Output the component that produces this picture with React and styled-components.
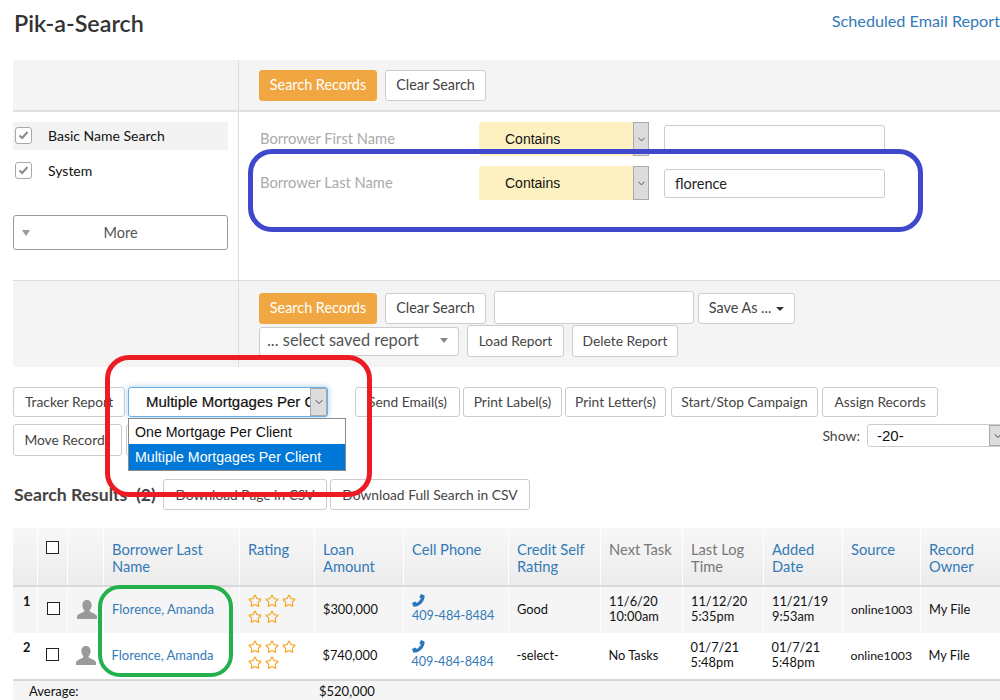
import React from 'react'
import styled, {createGlobalStyle} from 'styled-components'
import {Star, ChevronDown} from 'lucide-react'

const GlobalStyle = createGlobalStyle`
    html, body {
        margin: 0;
        padding: 0;
        background: #fff;
    }
    body {
        font-family: "Lato", "Open Sans", sans-serif;
        color: #333;
    }
`

const Page = styled.div`
    position: relative;
    width: 1000px;
    height: 700px;
    overflow: hidden;
    background: #fff;
`

const Header = styled.div`
    height: 60px;
    display: flex;
    justify-content: space-between;
    align-items: flex-start;
    padding-left: 14px;
`
const Title = styled.h1`
    margin: 10px 0 0;
    font-size: 23.3px;
    line-height: 27px;
    font-weight: 600;
    color: #333;
`
const ReportLink = styled.a`
    margin-top: 11px;
    font-size: 16.2px;
    line-height: 20px;
    color: #337ab7;
`

const Panel = styled.div`
    margin-left: 13px;
`
const Band = styled.div`
    display: flex;
    height: ${p => p.$height}px;
    background: #f4f4f4;
    border-bottom: ${p => p.$bottom ? '2px solid #e0e0e0' : 'none'};
    border-top: ${p => p.$top ? '1px solid #dcdcdc' : 'none'};
`
const SideCell = styled.div`
    width: 225px;
    flex: none;
    border-right: 1px solid #dcdcdc;
`
const MainCell = styled.div`
    flex: 1;
    min-width: 0;
    padding: ${p => p.$padding};
    display: flex;
    flex-direction: column;
`
const Middle = styled.div`
    display: flex;
    height: 168px;
`
const SideList = styled.div`
    width: 225px;
    flex: none;
    border-right: 1px solid #dcdcdc;
    padding-top: 10px;
`
const CheckRow = styled.div`
    display: flex;
    align-items: center;
    width: 215px;
    height: 28px;
    margin-bottom: 6px;
    padding-bottom: ${p => p.$active ? 2 : 0}px;
    box-sizing: border-box;
    background: ${p => p.$active ? '#f3f3f3' : 'transparent'};
    font-size: 14px;
    color: #111;
`
const CheckBox = styled.span`
    width: 15px;
    height: 15px;
    margin: 0 16px 0 2px;
    border: 1px solid #a8a8a8;
    border-radius: 3px;
    background: #fff;
    display: flex;
    align-items: center;
    justify-content: center;
`
const MoreButton = styled.div`
    position: relative;
    width: 213px;
    height: 33px;
    margin-top: 31px;
    border: 1px solid #999;
    border-radius: 3px;
    display: flex;
    align-items: center;
    justify-content: center;
    font-size: 14.5px;
    color: #555;
`
const MoreArrow = styled.span`
    position: absolute;
    left: 8px;
    top: 14px;
    border-left: 4px solid transparent;
    border-right: 4px solid transparent;
    border-top: 6px solid #999;
`
const Fields = styled.div`
    flex: 1;
    padding: 10px 0 0 21px;
    display: flex;
    flex-direction: column;
    gap: 10px;
`
const FieldRow = styled.div`
    display: grid;
    grid-template-columns: 204px 170px 221px;
    column-gap: 15px;
    align-items: center;
    height: 34px;
`
const FieldLabel = styled.span`
    padding-bottom: 2px;
    font-size: 14.7px;
    color: #aaa;
`
const MatchSelect = styled.div`
    height: 34px;
    box-sizing: border-box;
    display: flex;
    align-items: center;
    justify-content: space-between;
    background: #fdf1c1;
    border-radius: 3px;
    padding-left: 26px;
    font-family: "Liberation Sans", Arial, sans-serif;
    font-size: 14px;
    color: #111;
`
const ArrowBox = styled.span`
    width: ${p => p.$width || 16}px;
    align-self: stretch;
    flex: none;
    display: flex;
    align-items: center;
    justify-content: center;
    background: #dcdcdc;
    border: 1px solid #aaa;
    box-sizing: border-box;
    color: #444;
`
const TextBox = styled.div`
    height: ${p => p.$height || 29}px;
    width: ${p => p.$width ? p.$width + 'px' : 'auto'};
    box-sizing: border-box;
    background: #fff;
    border: 1px solid #ccc;
    border-radius: 3px;
    padding-left: 10px;
    display: flex;
    align-items: center;
    font-size: 14.5px;
    color: #222;
`
const ButtonRow = styled.div`
    display: flex;
    align-items: ${p => p.$align || 'center'};
    gap: ${p => p.$gap || 4}px;
    margin-top: ${p => p.$top || 0}px;
`
const Button = styled.div`
    height: ${p => p.$height || 31}px;
    width: ${p => p.$width}px;
    flex: none;
    box-sizing: border-box;
    display: flex;
    align-items: center;
    justify-content: center;
    margin-left: ${p => p.$shift || 0}px;
    padding-bottom: ${p => p.$large ? 2 : 1}px;
    border-radius: 3px;
    border: 1px solid ${p => p.$primary ? '#f0a741' : '#ccc'};
    background: ${p => p.$primary ? '#f0a741' : '#fff'};
    color: ${p => p.$primary ? '#fff' : '#444'};
    font-size: ${p => p.$large ? 14.4 : 13.8}px;
    white-space: nowrap;
`
const Caret = styled.span`
    margin-left: 5px;
    margin-top: 2px;
    border-left: 4px solid transparent;
    border-right: 4px solid transparent;
    border-top: 4px solid #333;
`
const SavedSelect = styled.div`
    width: 200px;
    height: 29px;
    box-sizing: border-box;
    display: flex;
    align-items: center;
    justify-content: space-between;
    padding: 0 10px 3px 7px;
    border: 1px solid #ccc;
    border-radius: 3px;
    background: #fff;
    font-size: 16.4px;
    color: #555;
`
const GreyArrow = styled.span`
    margin-top: 2px;
    border-left: 4px solid transparent;
    border-right: 4px solid transparent;
    border-top: 5px solid #888;
`

const Toolbar = styled.div`
    margin: 20px 0 0 13px;
    position: relative;
    display: flex;
    flex-direction: column;
    gap: 7px;
`
const ReportSelectWrap = styled.div`
    position: relative;
    width: 200px;
    height: 30px;
    flex: none;
    margin-right: 24px;
`
const ReportSelect = styled.div`
    height: 30px;
    box-sizing: border-box;
    display: flex;
    align-items: stretch;
    border: 1px solid #66afe9;
    border-radius: 3px;
    box-shadow: 0 0 6px rgba(102, 175, 233, .6);
    background: #fff;
    font-family: "Liberation Sans", Arial, sans-serif;
    font-size: 15px;
    color: #111;
    -webkit-text-stroke: .2px #111;
`
const ReportValue = styled.span`
    flex: 1;
    min-width: 0;
    overflow: hidden;
    white-space: nowrap;
    padding-left: 17px;
    line-height: 28px;
`
const Dropdown = styled.div`
    position: absolute;
    z-index: 2;
    top: 31px;
    left: 0;
    width: 218px;
    box-sizing: border-box;
    border: 1px solid #8c8c8c;
    background: #fff;
    font-family: "Liberation Sans", Arial, sans-serif;
    font-size: 14.2px;
`
const DropdownOption = styled.div`
    height: ${p => p.$selected ? 26 : 25}px;
    padding-left: 6px;
    display: flex;
    align-items: center;
    color: ${p => p.$selected ? '#fff' : '#111'};
    background: ${p => p.$selected ? '#0078d7' : '#fff'};
`
const SecondRow = styled.div`
    display: flex;
    align-items: flex-start;
    gap: 4px;
`
const ShowGroup = styled.div`
    margin-left: auto;
    display: flex;
    align-items: center;
    gap: 7px;
    font-size: 14px;
    color: #444;
`
const ShowSelect = styled.div`
    width: 140px;
    height: 23px;
    box-sizing: border-box;
    display: flex;
    justify-content: space-between;
    align-items: stretch;
    border: 1px solid #ccc;
    border-radius: 3px;
    padding-left: 9px;
    line-height: 21px;
    font-family: "Liberation Sans", Arial, sans-serif;
    font-size: 15px;
    color: #111;
    margin-right: -7px;
`
const ResultsRow = styled.div`
    margin: 23px 0 0 14px;
    display: flex;
    align-items: center;
    gap: 3px;
`
const ResultsTitle = styled.h2`
    margin: 0;
    width: 146px;
    flex: none;
    font-size: 17.6px;
    line-height: 28px;
    font-weight: 700;
    color: #444;
    white-space: pre;
`

const Table = styled.table`
    margin: 18px 0 0 13px;
    width: 987px;
    table-layout: fixed;
    border-collapse: collapse;
    font-size: 12.8px;
    color: #111;
`
const HeadCell = styled.th`
    height: 58px;
    box-sizing: border-box;
    padding: 13px 8px 0 8.500px;
    vertical-align: top;
    text-align: left;
    font-weight: 400;
    font-size: 14.7px;
    line-height: 17px;
    color: ${p => p.$muted ? '#777' : '#337ab7'};
    background: linear-gradient(#f7f7f7, #ececec);
    border-right: 1px solid #fff;
    border-bottom: 2px solid #d8d8d8;
`
const Row = styled.tr`
    background: ${p => p.$striped ? '#f5f5f5' : '#fff'};
`
const Cell = styled.td`
    height: 47px;
    box-sizing: border-box;
    padding: 0 4px 2px 8.500px;
    line-height: 15px;
    border-right: ${p => p.$striped ? '1px solid #fff' : 'none'};
    vertical-align: middle;
`
const NumberCell = styled(Cell)`
    vertical-align: top;
    padding: 7px 0 0 10px;
    font-weight: 700;
`
const BoxCell = styled(Cell)`
    padding: 0 0 ${p => p.$lift || 0}px 9px;
`
const SourceCell = styled(Cell)`
    font-size: 12.3px;
`
const TableCheck = styled.span`
    display: block;
    width: 13px;
    height: 13px;
    box-sizing: border-box;
    border: 1px solid #222;
    background: #fff;
`
const NameLink = styled.a`
    color: #337ab7;
    font-size: 13px;
`
const Stars = styled.div`
    display: flex;
    flex-wrap: wrap;
    width: 54px;
    gap: 2px 3px;
    color: #f5a623;
`
const PhoneLink = styled.a`
    display: block;
    color: #337ab7;
    font-size: 12.6px;
    line-height: 16px;
`
const PhoneIcon = styled.span`
    display: block;
    height: 14px;
    color: #2b78bd;
`
const FooterCell = styled.td`
    height: 20px;
    padding: 0 0 0 ${p => p.$pad || 0}px;
    border-top: 2px solid #d8d8d8;
    background: #f5f5f5;
    font-size: 13px;
`

const Outline = styled.div`
    position: absolute;
    z-index: 5;
    box-sizing: border-box;
    pointer-events: none;
    left: ${p => p.$x}px;
    top: ${p => p.$y}px;
    width: ${p => p.$w}px;
    height: ${p => p.$h}px;
    border: ${p => p.$stroke}px solid ${p => p.$color};
    border-radius: ${p => p.$radius}px;
`

const Tick = () => (
    <svg width="11" height="10" viewBox="0 0 11 10">
        <path d="M1.5 5.5 L4.2 8 L9.5 2" fill="none" stroke="#8a8a8a" strokeWidth="2" />
    </svg>
)

const Person = () => (
    <svg width="20" height="19" viewBox="0 0 20 19" style={{display: 'block'}}>
        <path
            d="M10 0c3 0 4.6 2.2 4.6 5.2 0 2-.8 3.8-2 5 0 1 .4 1.5 2 2.2 2.500 1 4.400 2 5.400 3.600V19H0v-3c1-1.600 2.900-2.600 5.400-3.600 1.600-.7 2-1.200 2-2.200-1.200-1.200-2-3-2-5C5.400 2.200 7 0 10 0z"
            fill="#9a9a9a"
        />
    </svg>
)

const Handset = () => (
    <svg width="13" height="13" viewBox="0 0 13 13" style={{display: 'block'}}>
        <path
            d="M9 0 L12.600 1.400 C13 7.500 7.500 12.600 1.400 12.800 L0 9 L3.400 7.400 L4.800 9 C6.600 8 8 6.500 8.900 4.600 L7.300 3.300 Z"
            fill="currentColor"
        />
    </svg>
)

const columns = [24, 30, 36, 136, 75, 89, 105, 92, 82, 81, 79, 78, 80]

const headers = [
    {label: 'Borrower Last Name'},
    {label: 'Rating'},
    {label: 'Loan Amount'},
    {label: 'Cell Phone'},
    {label: 'Credit Self Rating'},
    {label: 'Next Task', muted: true},
    {label: 'Last Log Time', muted: true},
    {label: 'Added Date'},
    {label: 'Source'},
    {label: 'Record Owner'},
]

const records = [
    {id: 1, amount: '$300,000', credit: 'Good', task: ['11/6/20', '10:00am'], log: ['11/12/20', '5:35pm'], added: ['11/21/19', '9:53am']},
    {id: 2, amount: '$740,000', credit: '-select-', task: ['No Tasks'], log: ['01/7/21', '5:48pm'], added: ['01/7/21', '5:48pm']},
]

const Lines = ({lines}) => lines.map((line, i) => <div key={i}>{line}</div>)

const App = () => {
    return (
        <Page>
            <GlobalStyle />
            <Header>
                <Title>Pik-a-Search</Title>
                <ReportLink>Scheduled Email Report</ReportLink>
            </Header>

            <Panel>
                <Band $height={50} $bottom>
                    <SideCell />
                    <MainCell $padding="10px 0 0 20px">
                        <ButtonRow $gap={8}>
                            <Button $primary $large $width={118}>Search Records</Button>
                            <Button $large $width={101}>Clear Search</Button>
                        </ButtonRow>
                    </MainCell>
                </Band>
                <Middle>
                    <SideList>
                        <CheckRow $active><CheckBox><Tick /></CheckBox>Basic Name Search</CheckRow>
                        <CheckRow><CheckBox><Tick /></CheckBox>System</CheckRow>
                        <MoreButton><MoreArrow />More</MoreButton>
                    </SideList>
                    <Fields>
                        <FieldRow>
                            <FieldLabel>Borrower First Name</FieldLabel>
                            <MatchSelect>Contains<ArrowBox><ChevronDown size={11} /></ArrowBox></MatchSelect>
                            <TextBox />
                        </FieldRow>
                        <FieldRow>
                            <FieldLabel>Borrower Last Name</FieldLabel>
                            <MatchSelect>Contains<ArrowBox><ChevronDown size={11} /></ArrowBox></MatchSelect>
                            <TextBox>florence</TextBox>
                        </FieldRow>
                    </Fields>
                </Middle>
                <Band $height={86} $top>
                    <SideCell />
                    <MainCell $padding="10px 0 0 20px">
                        <ButtonRow $gap={8} $align="flex-end">
                            <Button $primary $large $width={118}>Search Records</Button>
                            <Button $large $width={101}>Clear Search</Button>
                            <TextBox $width={200} $height={33} />
                            <Button $large $width={97} $shift={-4}>Save As ...<Caret /></Button>
                        </ButtonRow>
                        <ButtonRow $gap={8} $top={1}>
                            <SavedSelect>... select saved report<GreyArrow /></SavedSelect>
                            <Button $width={97} $height={32}>Load Report</Button>
                            <Button $width={106} $height={32}>Delete Report</Button>
                        </ButtonRow>
                    </MainCell>
                </Band>
            </Panel>

            <Toolbar>
                <ButtonRow $gap={3}>
                    <Button $width={112} $height={30}>Tracker Report</Button>
                    <ReportSelectWrap>
                        <ReportSelect>
                            <ReportValue>Multiple Mortgages Per Client</ReportValue>
                            <ArrowBox $width={17}><ChevronDown size={12} /></ArrowBox>
                        </ReportSelect>
                        <Dropdown>
                            <DropdownOption>One Mortgage Per Client</DropdownOption>
                            <DropdownOption $selected>Multiple Mortgages Per Client</DropdownOption>
                        </Dropdown>
                    </ReportSelectWrap>
                    <Button $width={105} $height={30}>Send Email(s)</Button>
                    <Button $width={99} $height={30}>Print Label(s)</Button>
                    <Button $width={101} $height={30}>Print Letter(s)</Button>
                    <Button $width={147} $height={30} $shift={2}>Start/Stop Campaign</Button>
                    <Button $width={116} $height={30} $shift={1}>Assign Records</Button>
                </ButtonRow>
                <SecondRow>
                    <Button $width={109} $height={32}>Move Records</Button>
                    <Button $width={100} $height={32} />
                    <ShowGroup>
                        Show:
                        <ShowSelect>-20-<ArrowBox $width={17}><ChevronDown size={12} /></ArrowBox></ShowSelect>
                    </ShowGroup>
                </SecondRow>
            </Toolbar>

            <ResultsRow>
                <ResultsTitle>Search Results  (2)</ResultsTitle>
                <Button $width={164}>Download Page in CSV</Button>
                <Button $width={200}>Download Full Search in CSV</Button>
            </ResultsRow>

            <Table>
                <colgroup>
                    {columns.map((width, i) => <col key={i} style={{width}} />)}
                </colgroup>
                <thead>
                    <tr>
                        <HeadCell />
                        <HeadCell><TableCheck /></HeadCell>
                        <HeadCell />
                        {headers.map(h => <HeadCell key={h.label} $muted={h.muted}>{h.label}</HeadCell>)}
                    </tr>
                </thead>
                <tbody>
                    {records.map((r, i) => {
                        const striped = i % 2 === 0
                        return (
                            <Row key={r.id} $striped={striped}>
                                <NumberCell $striped={striped}>{r.id}</NumberCell>
                                <BoxCell $striped={striped} $lift={3}><TableCheck /></BoxCell>
                                <BoxCell $striped={striped} $lift={2}><Person /></BoxCell>
                                <Cell $striped={striped}><NameLink>Florence, Amanda</NameLink></Cell>
                                <Cell $striped={striped}>
                                    <Stars>{[0, 1, 2, 3, 4].map(n => <Star key={n} size={14} strokeWidth={2} />)}</Stars>
                                </Cell>
                                <Cell $striped={striped}>{r.amount}</Cell>
                                <Cell $striped={striped}>
                                    <PhoneIcon><Handset /></PhoneIcon>
                                    <PhoneLink>409-484-8484</PhoneLink>
                                </Cell>
                                <Cell $striped={striped}>{r.credit}</Cell>
                                <Cell $striped={striped}><Lines lines={r.task} /></Cell>
                                <Cell $striped={striped}><Lines lines={r.log} /></Cell>
                                <Cell $striped={striped}><Lines lines={r.added} /></Cell>
                                <SourceCell $striped={striped}>online1003</SourceCell>
                                <Cell $striped={striped}>My File</Cell>
                            </Row>
                        )
                    })}
                </tbody>
                <tfoot>
                    <tr>
                        <FooterCell colSpan={5} $pad={16}>Average:</FooterCell>
                        <FooterCell $pad={5}>$520,000</FooterCell>
                        <FooterCell colSpan={7} />
                    </tr>
                </tfoot>
            </Table>

            <Outline $x={248} $y={149} $w={675} $h={83} $stroke={5} $color="#3f48cc" $radius={24} />
            <Outline $x={105} $y={355} $w={267} $h={142} $stroke={5} $color="#ed1c24" $radius={24} />
            <Outline $x={98} $y={585} $w={135} $h={92} $stroke={4} $color="#22b14c" $radius={22} />
        </Page>
    )
}

export default App
